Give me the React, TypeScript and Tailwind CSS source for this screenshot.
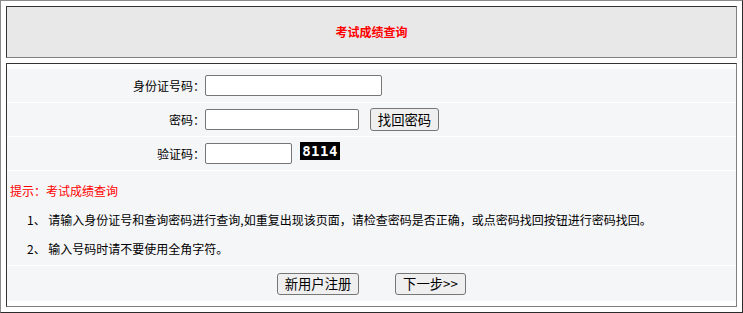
import React from "react";

const font = { fontFamily: '"Microsoft YaHei", "Noto Sans CJK SC", sans-serif' };

export default function App() {
  return (
    <div
      className="w-[743px] h-[313px] box-border border border-t-[#8a8a8a] border-l-[#8a8a8a] border-b-[#2b2b2b] border-r-[#2b2b2b] bg-white p-[5px] flex flex-col gap-[5px] text-[12px] text-black"
      style={font}
    >
      <div className="h-[52px] shrink-0 box-border border border-t-[#333] border-l-[#333] border-b-[#808080] border-r-[#808080] bg-[#e8e8e8] flex items-center justify-center">
        <span className="text-[#ff0000] font-bold text-[12px]">考试成绩查询</span>
      </div>
      <div className="h-[244px] shrink-0 box-border border border-t-[#333] border-l-[#333] border-b-[#808080] border-r-[#808080] bg-white flex flex-col">
        <div className="h-[5px] shrink-0" />
        <div className="flex flex-col gap-px">
          <div className="h-[33px] bg-[#f5f6f8] flex items-center">
            <div className="w-[198px] text-right pr-0">身份证号码：</div>
            <input className="w-[177px] h-[21px] bg-white border border-[#767676] rounded-[2px] outline-none" />
          </div>
          <div className="h-[33px] bg-[#f5f6f8] flex items-center">
            <div className="w-[198px] text-right">密码：</div>
            <input type="password" className="w-[154px] h-[21px] bg-white border border-[#767676] rounded-[2px] outline-none" />
            <button className="ml-[11px] w-[69px] h-[23px] bg-[#efefef] border border-[#767676] rounded-[3px] text-[13.33px] leading-none text-black">
              找回密码
            </button>
          </div>
          <div className="h-[33px] bg-[#f5f6f8] flex items-center">
            <div className="w-[198px] text-right">验证码：</div>
            <input className="w-[87px] h-[21px] bg-white border border-[#767676] rounded-[2px] outline-none" />
            <span
              className="ml-[8px] mb-[6px] w-[40px] h-[18px] bg-black text-white font-bold text-[14px] leading-[18px] text-center tracking-[0.5px]"
              style={{ fontFamily: '"DejaVu Sans Mono", monospace' }}
            >
              8114
            </span>
          </div>
          <div className="h-[94px] bg-[#f5f6f8] pt-[5px] leading-[29px]">
            <div className="pl-[3px] text-[#ff0000]">提示：考试成绩查询</div>
            <div className="pl-[20px]">1、 请输入身份证号和查询密码进行查询,如重复出现该页面，请检查密码是否正确，或点密码找回按钮进行密码找回。</div>
            <div className="pl-[20px]">2、 输入号码时请不要使用全角字符。</div>
          </div>
          <div className="h-[35px] bg-[#f5f6f8] flex items-center justify-center gap-[36px]">
            <button className="w-[82px] h-[22px] bg-[#efefef] border border-[#767676] rounded-[3px] text-[13.33px] leading-none text-black">
              新用户注册
            </button>
            <button className="w-[71px] h-[22px] bg-[#efefef] border border-[#767676] rounded-[3px] text-[13.33px] leading-none text-black">
              下一步&gt;&gt;
            </button>
          </div>
        </div>
      </div>
    </div>
  );
}
